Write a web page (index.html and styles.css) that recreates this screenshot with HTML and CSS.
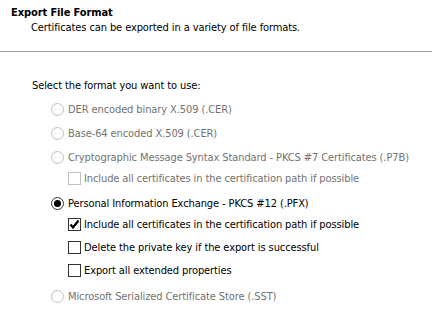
FILE: index.html
```html
<!DOCTYPE html>
<html lang="en">
<head>
  <meta charset="UTF-8" />
  <title>Certificate Export Wizard</title>
  <link rel="stylesheet" href="styles.css">
</head>
<body>

<div class="header">
  <h1>Export File Format</h1>
  <p>Certificates can be exported in a variety of file formats.</p>
</div>

<div class="content">
  <p class="prompt">Select the format you want to use:</p>

  <div class="options">
    <label class="radio disabled"><span class="dot"></span>DER encoded binary X.509 (.CER)</label>
    <label class="radio disabled"><span class="dot"></span>Base-64 encoded X.509 (.CER)</label>
    <label class="radio disabled"><span class="dot"></span>Cryptographic Message Syntax Standard - PKCS #7 Certificates (.P7B)</label>
    <label class="check disabled"><span class="box"></span>Include all certificates in the certification path if possible</label>
    <label class="radio on"><span class="dot"></span>Personal Information Exchange - PKCS #12 (.PFX)</label>
    <label class="check on"><span class="box">
      <svg width="11" height="11" viewBox="0 0 11 11"><path d="M1.5 5.5 L4 8.5 L9.5 1.5" fill="none" stroke="#000" stroke-width="2.2"/></svg>
    </span>Include all certificates in the certification path if possible</label>
    <label class="check"><span class="box"></span>Delete the private key if the export is successful</label>
    <label class="check"><span class="box"></span>Export all extended properties</label>
    <label class="radio disabled sst"><span class="dot"></span>Microsoft Serialized Certificate Store (.SST)</label>
  </div>
</div>

</body>
</html>
```

FILE: styles.css
```css
body {
  margin: 0;
  background: #fff;
  font-family: Tahoma, "DejaVu Sans Condensed", "Liberation Sans", sans-serif;
  font-size: 11px;
  letter-spacing: -0.1px;
  color: #000;
}
.header {
  padding: 5px 0 0 11px;
  height: 46px;
  border-bottom: 1px solid #a0a0a0;
}
h1 {
  margin: 0;
  font-size: 11px;
  font-weight: bold;
  line-height: 15px;
}
.header p {
  margin: 0;
  padding-left: 20px;
  line-height: 15px;
}
.content {
  padding: 26px 0 0 32px;
}
.prompt {
  margin: 0 0 6px;
  line-height: 15px;
}
.options {
  display: flex;
  flex-direction: column;
  padding-left: 19px;
}
.radio, .check {
  display: flex;
  align-items: center;
  height: 20px;
}
.radio + .radio {
  margin-top: 4px;
}
.check {
  padding-left: 17px;
  margin-top: 3px;
}
.radio + .check {
  margin-top: 1px;
}
.check + .radio {
  margin-top: 5px;
}
.radio.sst {
  margin-top: 6px;
}
.disabled {
  color: #727272;
}
.dot {
  width: 11px;
  height: 11px;
  border: 1px solid #8a8a8a;
  border-radius: 50%;
  margin-right: 4px;
  display: flex;
  align-items: center;
  justify-content: center;
  background: #fff;
}
.radio.disabled .dot {
  border-color: #c0c0c0;
}
.radio.on .dot {
  border-color: #333;
}
.radio.on .dot::after {
  content: "";
  width: 7px;
  height: 7px;
  border-radius: 50%;
  background: #000;
}
.box {
  width: 11px;
  height: 11px;
  border: 1px solid #333;
  margin-right: 3px;
  display: flex;
  align-items: center;
  justify-content: center;
  background: #fff;
}
.check.disabled .box {
  border-color: #c0c0c0;
}
```
